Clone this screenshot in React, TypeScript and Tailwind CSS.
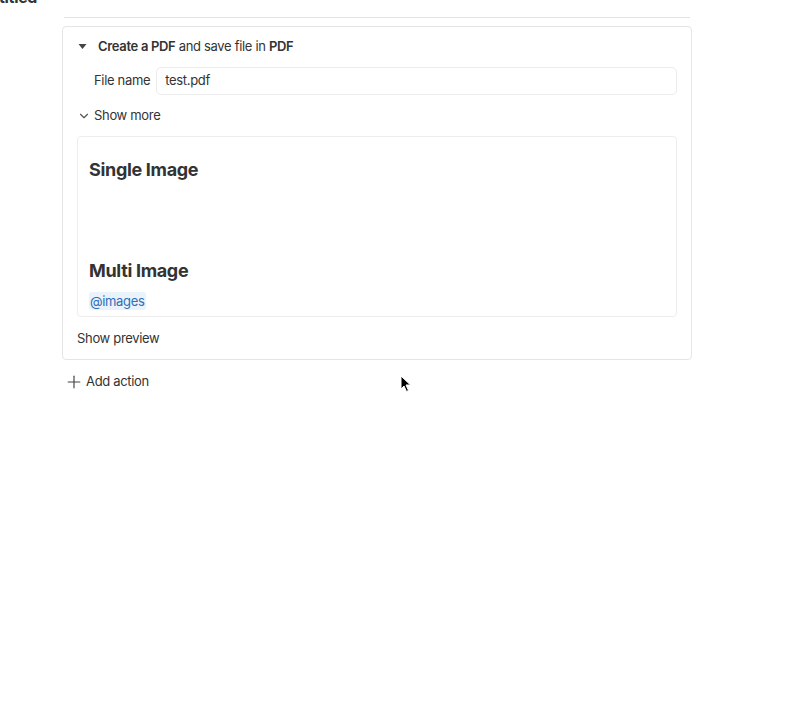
import { ChevronDown, Plus } from "lucide-react";

const Cursor = () => (
  <svg width="12" height="18" viewBox="0 0 12 18" className="absolute left-[400px] top-[375px]">
    <path d="M1 1 L1 14 L4 11 L6.5 16.5 L8.5 15.5 L6 10 L10.5 10 Z" fill="#000" stroke="#fff" strokeWidth="1" />
  </svg>
);

const App = () => {
  return (
    <div className="relative h-[712px] w-[800px] overflow-hidden bg-white text-[13px] tracking-[-0.025em] text-[#333] font-['Inter','Liberation_Sans',sans-serif]">
      <h1 className="-ml-[22px] -mt-[13px] text-[16px] font-bold leading-[20px] text-[#333]">Untitled</h1>

      <div className="ml-[64px] mt-[10px] w-[626px] border-t border-[#e3e3e3]" />

      <div className="ml-[62px] mt-[8px] w-[630px] rounded-[4px] border border-[#e5e5e5] px-[14px] pb-[12px] pt-[10px]">
        <div className="flex h-[19px] items-center gap-[11px] pl-[1px]">
          <svg width="9" height="7" viewBox="0 0 9 7">
            <path d="M0.5 1 L8.5 1 L4.5 6 Z" fill="#444" />
          </svg>
          <div>
            <span className="font-semibold">Create a PDF</span> and save file in <span className="font-semibold">PDF</span>
          </div>
        </div>

        <div className="mt-[11px] flex items-center gap-[6px] pl-[17px]">
          <span>File name</span>
          <div className="flex h-[28px] flex-1 items-center rounded-[5px] border border-[#ececec] px-[8px]">test.pdf</div>
        </div>

        <div className="mt-[8px] flex h-[26px] items-center gap-[3px]">
          <ChevronDown className="size-[14px] text-[#555]" strokeWidth={2} />
          <span>Show more</span>
        </div>

        <div className="mt-[7px] rounded-[4px] border border-[#ededed] px-[11px] pb-[7px] pt-[21px]">
          <h2 className="text-[18px] font-bold leading-[24px]">Single Image</h2>
          <div className="h-[77px]" />
          <h2 className="text-[18px] font-bold leading-[24px]">Multi Image</h2>
          <div className="mt-[10px] leading-[16px]">
            <span className="rounded-[3px] bg-[#eaf2fb] px-[1px] py-[1px] text-[#2f6fb6]">@images</span>
          </div>
        </div>

        <div className="mt-[12px] h-[18px] leading-[18px]">Show preview</div>
      </div>

      <div className="ml-[64px] mt-[12px] flex items-center gap-[2px]">
        <Plus className="size-[20px] text-[#444]" strokeWidth={1.4} />
        <span>Add action</span>
      </div>

      <Cursor />
    </div>
  );
};

export default App;
